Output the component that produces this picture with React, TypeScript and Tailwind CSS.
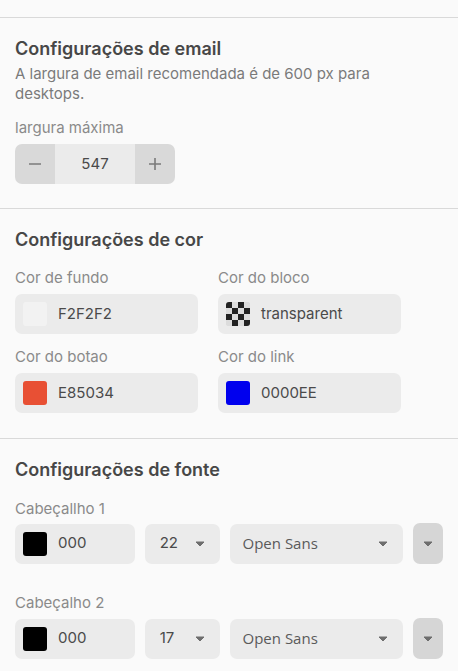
import React from "react";

const Caret = () => (
  <svg width="10" height="6" viewBox="0 0 10 6" className="shrink-0">
    <path d="M1 1 L9 1 L5 5 Z" fill="#6e6e6e" stroke="#6e6e6e" strokeWidth="1" strokeLinejoin="round" />
  </svg>
);

const Checker = () => (
  <div className="w-[24px] h-[24px] rounded-[3px] overflow-hidden grid grid-cols-4 grid-rows-4 bg-[#d6d6d6]">
    {Array.from({ length: 16 }).map((_, i) => {
      const r = Math.floor(i / 4);
      const c = i % 4;
      const dark = (r + c) % 2 === 0;
      return <div key={i} className={dark ? "bg-[#222]" : "bg-[#dcdcdc]"} />;
    })}
  </div>
);

const ColorInput = ({ swatch, value, checker, width }: { swatch?: string; value: string; checker?: boolean; width: string }) => (
  <div className={`${width} h-[40px] rounded-[7px] bg-[#ebebeb] flex items-center pl-[8px] gap-[11px]`}>
    {checker ? (
      <Checker />
    ) : (
      <div className="w-[24px] h-[24px] rounded-[3px]" style={{ background: swatch }} />
    )}
    <span className="text-[15px] text-[#4a4a4a]">{value}</span>
  </div>
);

const Label = ({ children }: { children: React.ReactNode }) => (
  <div className="text-[15px] leading-[20px] text-[#8a8a8a]">{children}</div>
);

const Heading = ({ children }: { children: React.ReactNode }) => (
  <div className="text-[18px] leading-[24px] font-semibold text-[#474747]">{children}</div>
);

const FontRow = ({ size }: { size: string }) => (
  <div className="flex items-center gap-[10px]">
    <ColorInput swatch="#000" value="000" width="w-[120px]" />
    <div className="w-[75px] h-[40px] rounded-[7px] bg-[#ebebeb] flex items-center justify-between pl-[15px] pr-[15px]">
      <span className="text-[15px] text-[#4a4a4a]">{size}</span>
      <Caret />
    </div>
    <div className="w-[174px] h-[40px] rounded-[7px] bg-[#ebebeb] flex items-center justify-between pl-[13px] pr-[15px]">
      <span className="text-[15px] text-[#5a5a5a]" style={{ fontFamily: '"Open Sans", sans-serif' }}>Open Sans</span>
      <Caret />
    </div>
    <div className="w-[30px] h-[41px] rounded-[7px] bg-[#d6d6d6] flex items-center justify-center">
      <Caret />
    </div>
  </div>
);

export default function App() {
  return (
    <div className="w-[458px] h-[671px] overflow-hidden bg-[#fafafa]" style={{ fontFamily: 'Inter, "Noto Sans", sans-serif' }}>
      <div className="h-[17px]" />
      <div className="h-px bg-[#d9d9d9]" />
      <section className="px-[15px] pt-[19px] pb-[24px]">
        <Heading>Configurações de email</Heading>
        <div className="mt-[3px] text-[15px] leading-[20px] text-[#7a7a7a] pr-[20px]">
          A largura de email recomendada é de 600 px para desktops.
        </div>
        <div className="mt-[14px]">
          <Label>largura máxima</Label>
        </div>
        <div className="mt-[6px] w-[160px] h-[40px] rounded-[7px] overflow-hidden flex">
          <div className="w-[40px] h-full bg-[#d9d9d9] flex items-center justify-center">
            <svg width="14" height="14" viewBox="0 0 14 14"><path d="M1 7 H13" stroke="#7a7a7a" strokeWidth="1.6" /></svg>
          </div>
          <div className="flex-1 h-full bg-[#ebebeb] flex items-center justify-center text-[15px] text-[#4a4a4a]">547</div>
          <div className="w-[40px] h-full bg-[#d9d9d9] flex items-center justify-center">
            <svg width="14" height="14" viewBox="0 0 14 14"><path d="M1 7 H13 M7 1 V13" stroke="#7a7a7a" strokeWidth="1.6" /></svg>
          </div>
        </div>
      </section>
      <div className="h-px bg-[#d9d9d9]" />
      <section className="px-[15px] pt-[19px] pb-[25px]">
        <Heading>Configurações de cor</Heading>
        <div className="mt-[16px] grid grid-cols-[183px_183px] gap-x-[20px]">
          <div>
            <Label>Cor de fundo</Label>
            <div className="mt-[6px]"><ColorInput swatch="#f2f2f2" value="F2F2F2" width="w-[183px]" /></div>
          </div>
          <div>
            <Label>Cor do bloco</Label>
            <div className="mt-[6px]"><ColorInput checker value="transparent" width="w-[183px]" /></div>
          </div>
          <div className="mt-[13px]">
            <Label>Cor do botao</Label>
            <div className="mt-[6px]"><ColorInput swatch="#e85034" value="E85034" width="w-[183px]" /></div>
          </div>
          <div className="mt-[13px]">
            <Label>Cor do link</Label>
            <div className="mt-[6px]"><ColorInput swatch="#0000ee" value="0000EE" width="w-[183px]" /></div>
          </div>
        </div>
      </section>
      <div className="h-px bg-[#d9d9d9]" />
      <section className="px-[15px] pt-[19px]">
        <Heading>Configurações de fonte</Heading>
        <div className="mt-[17px]">
          <Label>Cabeçallho 1</Label>
          <div className="mt-[4px]"><FontRow size="22" /></div>
        </div>
        <div className="mt-[29px]">
          <Label>Cabeçalho 2</Label>
          <div className="mt-[5px]"><FontRow size="17" /></div>
        </div>
      </section>
    </div>
  );
}
